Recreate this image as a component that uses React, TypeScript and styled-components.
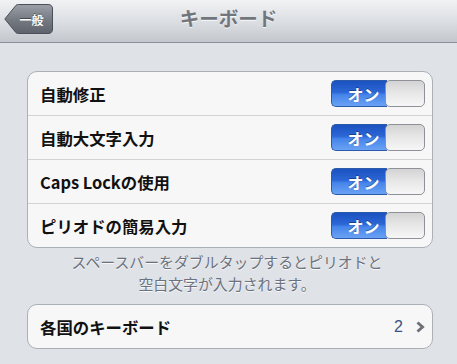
import React from "react";
import styled, { createGlobalStyle } from "styled-components";

const Global = createGlobalStyle`
  html, body { margin: 0; padding: 0; background: #dfe2e7; }
  body { font-family: "Noto Sans CJK JP", "Noto Sans", sans-serif; -webkit-font-smoothing: antialiased; }
`;

const Page = styled.div`
  width: 457px;
  height: 364px;
  background: #dfe2e7;
  overflow: hidden;
`;

const NavBar = styled.div`
  height: 42px;
  border-bottom: 1px solid #8c9199;
  background: linear-gradient(#f1f2f4, #dcdfe3 50%, #c3c7cd);
  display: grid;
  grid-template-columns: 1fr auto 1fr;
  align-items: center;
  padding: 0 4px;
  box-sizing: content-box;
`;

const BackButton = styled.div`
  position: relative;
  width: 49px;
  height: 30px;
  margin-top: -4px;
  display: flex;
  align-items: center;
  justify-content: center;
  padding-left: 6px;
  box-sizing: border-box;
`;

const BackShape = styled.svg`
  position: absolute;
  left: 0;
  top: 0;
`;

const BackLabel = styled.span`
  position: relative;
  color: #fff;
  font-size: 12px;
  font-weight: 700;
  text-shadow: 0 -1px 0 rgba(0, 0, 0, 0.45);
`;

const Title = styled.div`
  font-size: 19.5px;
  font-weight: 700;
  color: #71767d;
  text-shadow: 0 1px 0 rgba(255, 255, 255, 0.8);
  margin-top: -7px;
`;

const Content = styled.div`
  padding: 28px 24px 0 27px;
`;

const Group = styled.div`
  border: 1px solid #aab0b8;
  border-radius: 10px;
  background: #f7f7f7;
  overflow: hidden;
`;

const Row = styled.div`
  height: 43px;
  display: flex;
  align-items: center;
  justify-content: space-between;
  padding: 0 7px 0 12px;
  & + & {
    border-top: 1px solid #d2d3d5;
  }
`;

const Label = styled.span`
  font-size: 16.4px;
  font-weight: 700;
  color: #111;
`;

const Toggle = styled.div`
  width: 94px;
  height: 27px;
  display: flex;
`;

const ToggleOn = styled.div`
  width: 56px;
  height: 100%;
  display: flex;
  align-items: center;
  justify-content: center;
  padding-left: 8px;
  box-sizing: border-box;
  border: 1px solid #2c59a9;
  border-right: none;
  border-radius: 5px 0 0 5px;
  background: linear-gradient(#1b52c0, #2c66d6 45%, #4584ea 55%, #6aa2f3);
  color: #fff;
  font-size: 16px;
  font-weight: 700;
  text-shadow: 0 -1px 0 rgba(0, 0, 0, 0.35);
`;

const ToggleKnob = styled.div`
  flex: 1;
  height: 100%;
  margin-left: -2px;
  background: linear-gradient(#d3d3d3, #e6e6e6 45%, #f6f6f6);
  border: 1px solid #8e9298;
  border-radius: 5px;
  box-sizing: border-box;
`;

const Footer = styled.div`
  margin: 3px 0 10px;
  padding-right: 6px;
  text-align: center;
  color: #6b717d;
  text-shadow: 0 1px 0 rgba(255, 255, 255, 0.8);
`;

const FooterLine = styled.div`
  font-size: 14.9px;
  line-height: 21.5px;
`;

const Detail = styled.div`
  display: flex;
  align-items: center;
  gap: 13px;
`;

const Value = styled.span`
  font-size: 16px;
  color: #385487;
  font-family: "Liberation Sans", Arial, sans-serif;
`;

const Switch: React.FC = () => (
  <Toggle>
    <ToggleOn>オン</ToggleOn>
    <ToggleKnob />
  </Toggle>
);

const rows = ["自動修正", "自動大文字入力", "Caps Lockの使用", "ピリオドの簡易入力"];

export default function App() {
  return (
    <Page>
      <Global />
      <NavBar>
        <BackButton>
          <BackShape width="49" height="30" viewBox="0 0 49 30">
            <defs>
              <linearGradient id="bg" x1="0" y1="0" x2="0" y2="1">
                <stop offset="0" stopColor="#9ca1a8" />
                <stop offset="0.5" stopColor="#777c84" />
                <stop offset="1" stopColor="#5e636b" />
              </linearGradient>
            </defs>
            <path
              d="M0.8 15 L12 1.3 Q13 0.5 14.5 0.5 L44 0.5 Q48.5 0.5 48.5 5 L48.5 25 Q48.5 29.5 44 29.5 L14.5 29.5 Q13 29.5 12 28.7 Z"
              fill="url(#bg)"
              stroke="#4b5058"
              strokeWidth="1"
            />
          </BackShape>
          <BackLabel>一般</BackLabel>
        </BackButton>
        <Title>キーボード</Title>
        <div />
      </NavBar>
      <Content>
        <Group>
          {rows.map((r) => (
            <Row key={r}>
              <Label>{r}</Label>
              <Switch />
            </Row>
          ))}
        </Group>
        <Footer>
          <FooterLine>スペースバーをダブルタップするとピリオドと</FooterLine>
          <FooterLine>空白文字が入力されます。</FooterLine>
        </Footer>
        <Group>
          <Row>
            <Label>各国のキーボード</Label>
            <Detail>
              <Value>2</Value>
              <svg width="9" height="12" viewBox="0 0 9 12">
                <path d="M1.5 1.5 L6.5 6 L1.5 10.5" fill="none" stroke="#6f7379" strokeWidth="3" strokeLinejoin="miter" />
              </svg>
            </Detail>
          </Row>
        </Group>
      </Content>
    </Page>
  );
}
